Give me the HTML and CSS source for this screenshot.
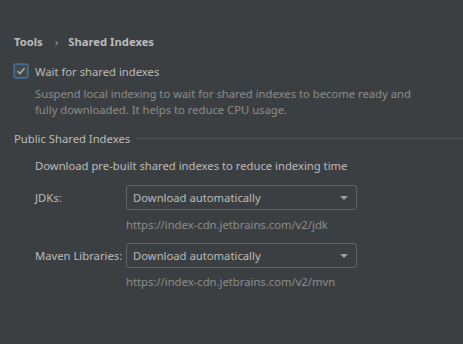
FILE: index.html
```html
<!doctype html>
<html lang="en">
  <head>
    <meta charset="UTF-8" />
    <title>Shared Indexes</title>
    <link rel="stylesheet" href="styles.css">
  </head>
  <body>
    <div class="page">
      <div class="breadcrumb">
        <span>Tools</span>
        <span class="sep">›</span>
        <span>Shared Indexes</span>
      </div>

      <label class="check-row">
        <span class="checkbox">
          <svg width="10" height="10" viewBox="0 0 10 10">
            <path d="M1.5 5.2 L4 7.6 L8.6 2" fill="none" stroke="#a7a7a7" stroke-width="1.6" />
          </svg>
        </span>
        <span>Wait for shared indexes</span>
      </label>
      <p class="hint">Suspend local indexing to wait for shared indexes to become ready and fully downloaded. It helps to reduce CPU usage.</p>

      <div class="group-title">
        <span>Public Shared Indexes</span>
        <div class="line"></div>
      </div>

      <div class="group">
        <p class="intro">Download pre-built shared indexes to reduce indexing time</p>

        <div class="field">
          <span class="field-label">JDKs:</span>
          <div class="select">
            <span>Download automatically</span>
            <span class="arrow"></span>
          </div>
        </div>
        <div class="url">https://index-cdn.jetbrains.com/v2/jdk</div>

        <div class="field">
          <span class="field-label">Maven Libraries:</span>
          <div class="select">
            <span>Download automatically</span>
            <span class="arrow"></span>
          </div>
        </div>
        <div class="url">https://index-cdn.jetbrains.com/v2/mvn</div>
      </div>
    </div>
  </body>
</html>
```

FILE: styles.css
```css
body {
  margin: 0;
  background-color: #3c3f41;
  color: #bbbbbb;
  font-family: 'Noto Sans', 'Open Sans', sans-serif;
  font-size: 11.25px;
}
.page {
  padding: 32px 0 0 14px;
}
.breadcrumb {
  display: flex;
  align-items: center;
  font-weight: bold;
  height: 18px;
}
.breadcrumb .sep {
  font-weight: normal;
  color: #9a9a9a;
  margin: 0 10px 0 12px;
}
.check-row {
  display: flex;
  align-items: center;
  gap: 7px;
  margin-top: 12px;
  height: 18px;
}
.checkbox {
  width: 12px;
  height: 12px;
  border: 1px solid #466d94;
  border-radius: 2px;
  background-color: #43494a;
  box-shadow: 0 0 0 1px #3d6185;
  display: flex;
  align-items: center;
  justify-content: center;
}
.hint {
  margin: 6px 0 0 21px;
  width: 385px;
  color: #8c8c8c;
  line-height: 16px;
}
.group-title {
  display: flex;
  align-items: center;
  gap: 6px;
  margin-top: 11px;
  height: 18px;
}
.group-title .line {
  flex: 1;
  height: 1px;
  background-color: #515151;
}
.group {
  padding-left: 21px;
}
.intro {
  margin: 10px 0 0;
  line-height: 18px;
}
.field {
  display: flex;
  align-items: center;
  margin-top: 10px;
}
.url + .field {
  margin-top: 9px;
}
.field-label {
  width: 91px;
  flex-shrink: 0;
  white-space: nowrap;
}
.select {
  width: 215px;
  height: 23px;
  border: 1px solid #646464;
  border-radius: 3px;
  display: flex;
  align-items: center;
  justify-content: space-between;
  padding: 0 8px 0 6px;
}
.arrow {
  width: 0;
  height: 0;
  border-left: 4px solid transparent;
  border-right: 4px solid transparent;
  border-top: 4px solid #9a9da1;
}
.url {
  margin: 6px 0 0 91px;
  color: #8c8c8c;
  line-height: 18px;
}
.url:last-child {
  margin-top: 5px;
}
```
